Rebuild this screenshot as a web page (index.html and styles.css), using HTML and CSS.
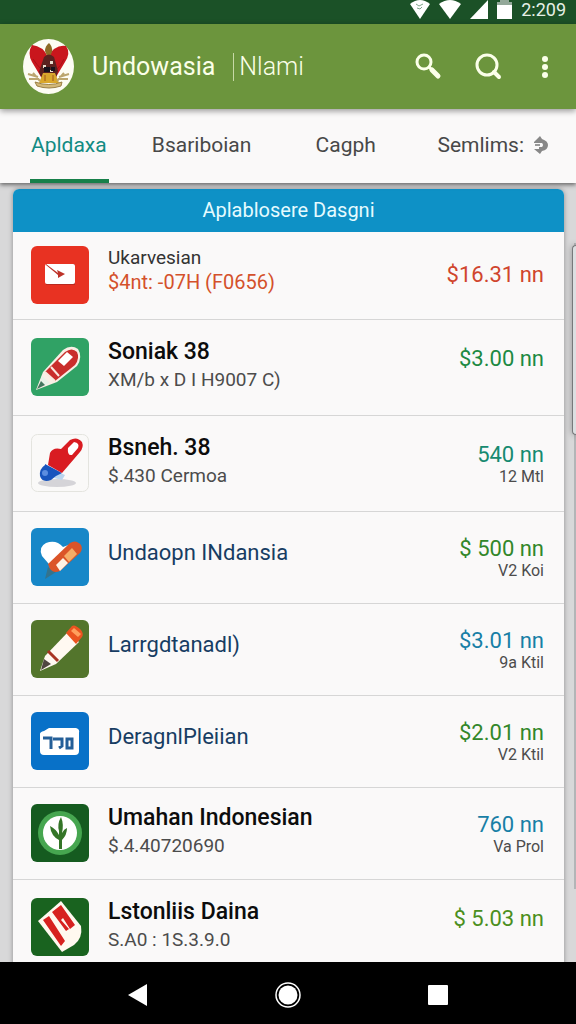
FILE: index.html
```html
<!DOCTYPE html>
<html lang="id">
<head>
    <meta charset="UTF-8">
    <meta name="viewport" content="width=device-width, initial-scale=1.0">
    <title>Undowasia</title>
    <link rel="stylesheet" href="styles.css">
</head>
<body>
    <div class="status-bar">
        <svg width="20" height="20" viewBox="0 0 20 20"><path d="M0 4Q10-4 20 4L10 19z" fill="#fff"/><path d="M6 4l3 2 4-2M7 8l3 1 2-2" fill="none" stroke="#7fa489"/></svg>
        <svg width="22" height="20" viewBox="0 0 22 20"><path d="M0 4Q11-4 22 4L11 19z" fill="#fff"/></svg>
        <svg width="18" height="20" viewBox="0 0 18 20"><path d="M18 0v19H0z" fill="#fff"/></svg>
        <svg width="15" height="20" viewBox="0 0 15 20"><path d="M3 0h9v2h3v5H0V2h3z" fill="#93a899"/><path d="M0 5h15v14H0z" fill="#fff"/></svg>
        <span class="clock">2:209</span>
    </div>

    <header class="app-bar">
        <svg class="emblem" viewBox="0 0 51 55">
            <ellipse cx="25.500" cy="27.500" rx="25.500" ry="27.500" fill="#fdfcf4"/>
            <path d="M25 18Q20 7 9 6Q4 14 9 23L18 38H33L42 23Q48 14 43 7Q32 5 25 18z" fill="#c9161d"/>
            <path d="M10 20Q14 26 18 30M41 20Q38 27 33 31" fill="none" stroke="#a90f15"/>
            <path d="M22 12Q22 7 26 4Q30 8 29 13L27 17H24z" fill="#8c6b26"/>
            <path d="M21 18Q26 13 31 18L35 32L32 42H20L16 33z" fill="#5a2220"/>
            <path d="M20 26h3v3h-3zM27 22h3v3h-3zM25 31h5v2h-5z" fill="#e9dfd0"/>
            <path d="M21 28h6v5h-6zM28 28h4v4h-4z" fill="#17121c"/>
            <path d="M20 34H32L36 44H16z" fill="#d9a72c"/>
            <path d="M22 36v6M30 36v6" stroke="#a2571d"/>
            <path d="M5 35L15 38M6 40L16 40M10 34L17 42M46 35L36 38M45 40L35 40M41 34L34 42" stroke="#bba56e" stroke-width="2"/>
            <path d="M12 43Q26 48 39 43L38 47Q26 51 14 47z" fill="#d3b878" stroke="#9b8046"/>
        </svg>
        <h1 class="app-title">Undowasia</h1>
        <span class="app-subtitle">Nlami</span>
        <div class="app-actions">
            <button class="icon-button" aria-label="Find">
                <svg width="28" height="28" viewBox="0 0 28 28" fill="none" stroke="#fbffe9"><circle cx="9" cy="9" r="7" stroke-width="3"/><path d="M14 14l4 4" stroke-width="3"/><path d="M17 17l6 6" stroke-width="5" stroke-linecap="round"/></svg>
            </button>
            <button class="icon-button" aria-label="Search">
                <svg width="28" height="28" viewBox="0 0 28 28" fill="none" stroke="#fbffe9"><circle cx="12" cy="12" r="10" stroke-width="3"/><path d="M19 19l5 5" stroke-width="4" stroke-linecap="round"/></svg>
            </button>
            <button class="icon-button" aria-label="More">
                <svg width="28" height="28" viewBox="0 0 28 28" fill="#fbffe9"><circle cx="14" cy="6" r="3"/><circle cx="14" cy="14" r="3"/><circle cx="14" cy="22" r="3"/></svg>
            </button>
        </div>
    </header>

    <nav class="tabs">
        <a class="tab active" href="#">Apldaxa</a>
        <a class="tab" href="#">Bsariboian</a>
        <a class="tab" href="#">Cagph</a>
        <a class="tab" href="#">Semlims:
            <svg width="14" height="20" viewBox="0 0 14 20"><path d="M0 7L6 1L8 4Q14 6 14 10Q14 15 8 16L6 19L0 14H5V12H8Q10 10 8 8H0z" fill="#888"/><path d="M1 10h5" stroke="#999" stroke-width="2"/></svg>
        </a>
    </nav>

    <main class="content">
        <section class="card">
            <h2 class="card-header">Aplablosere Dasgni</h2>
            <ul class="list">
                <li class="item first">
                    <svg class="thumb" viewBox="0 0 58 58"><rect width="58" height="58" rx="6" fill="#e83222"/><path d="M15 18h29v21H15z" fill="#b92a20"/><rect x="14" y="18" width="30" height="20" rx="2" fill="#fff"/><path d="M15 18L27 27L26 24L34 28L27 32L27 29L15 19z" fill="#bd3329"/></svg>
                    <div class="info">
                        <div class="name">Ukarvesian</div>
                        <div class="detail">$4nt: -07H (F0656)</div>
                    </div>
                    <div class="price red"><div class="amount">$16.31 nn</div></div>
                </li>
                <li class="item tall">
                    <svg class="thumb" viewBox="0 0 58 58"><rect width="58" height="58" rx="6" fill="#30a265"/><path d="M5 52L12 34L32 12Q40 6 47 11Q52 19 46 28L26 44z" fill="#f9eee5"/><path d="M14 34L34 14Q41 9 46 14Q49 20 44 27L24 43z" fill="#c92d2b"/><path d="M27 23L36 14L42 19L33 28z" fill="#fff"/><path d="M14 34l10 9M20 29l8 9" stroke="#fae8df" stroke-width="2"/><path d="M11 38l8 7L7 50z" fill="#e8f1e7"/><path d="M6 51l4-8 4 4z" fill="#44765e"/></svg>
                    <div class="info strong">
                        <div class="name">Soniak 38</div>
                        <div class="detail">XM/b x D I H9007 C)</div>
                    </div>
                    <div class="price green"><div class="amount">$3.00 nn</div></div>
                </li>
                <li class="item tall">
                    <svg class="thumb" viewBox="0 0 58 58"><rect x=".5" y=".5" width="57" height="57" rx="6" fill="#faf9f8" stroke="#e4e4df"/><ellipse cx="26" cy="49" rx="19" ry="4" fill="#d5d4d8"/><path d="M27 38l7 3-3 5-8-2z" fill="#b9d4ee"/><path d="M14 30L31 39L25 42L20 46Q11 49 9 42Q8 35 14 31z" fill="#1754bd"/><circle cx="14" cy="39" r="3" fill="#5b8de0"/><path d="M17 31L19 19Q22 13 30 15L39 6Q46 2 51 8Q53 13 49 18L31 39z" fill="#d91c22"/><path d="M37 14L43 8Q49 9 47 14L41 21Q36 22 37 14z" fill="#fff"/></svg>
                    <div class="info strong">
                        <div class="name">Bsneh. 38</div>
                        <div class="detail">$.430 Cermoa</div>
                    </div>
                    <div class="price teal"><div class="amount">540 nn</div><div class="unit">12 Mtl</div></div>
                </li>
                <li class="item">
                    <svg class="thumb" viewBox="0 0 58 58"><rect width="58" height="58" rx="6" fill="#1787c8"/><path d="M23 42L11 28Q7 19 15 15Q25 11 32 19L43 15L24 43z" fill="#fff"/><path d="M14 51l3-12 8 5z" fill="#34738d"/><path d="M17 36L39 15Q45 11 50 17Q52 21 49 25L29 43Q20 47 17 36z" fill="#db5428"/><path d="M33 28L41 20L46 26L38 34z" fill="#f6ac67"/><path d="M25 37L32 30L37 35L29 43z" fill="#fff2e4"/></svg>
                    <div class="info single"><div class="name">Undaopn INdansia</div></div>
                    <div class="price leaf"><div class="amount">$ 500 nn</div><div class="unit">V2 Koi</div></div>
                </li>
                <li class="item">
                    <svg class="thumb" viewBox="0 0 58 58"><rect width="58" height="58" rx="6" fill="#53752c"/><path d="M9 51L14 36L37 12L48 22L25 44z" fill="#fff9f1"/><path d="M35 13L41 6Q44 4 50 10Q53 14 51 17L45 24z" fill="#eb5420"/><path d="M40 11l3-3 7 6-3 3z" fill="#ffa05d"/><path d="M17 31L27 41" stroke="#a83523" stroke-width="3"/><path d="M13 39l7 5-10 6z" fill="#504741"/></svg>
                    <div class="info single"><div class="name">Larrgdtanadl)</div></div>
                    <div class="price blue"><div class="amount">$3.01 nn</div><div class="unit">9a Ktil</div></div>
                </li>
                <li class="item">
                    <svg class="thumb" viewBox="0 0 58 58"><rect width="58" height="58" rx="6" fill="#0871c8"/><path d="M13 19L18 16H45Q49 17 48 21V39Q48 43 44 43H13Q9 43 9 39V22Q9 20 13 19z" fill="#fff"/><path d="M12 26H20V37M22 27H31V34L28 36M36 27H41V36H36z" fill="none" stroke="#245f98" stroke-width="3"/></svg>
                    <div class="info single"><div class="name">DeragnlPleiian</div></div>
                    <div class="price leaf"><div class="amount">$2.01 nn</div><div class="unit">V2 Ktil</div></div>
                </li>
                <li class="item">
                    <svg class="thumb" viewBox="0 0 58 58"><rect width="58" height="58" rx="6" fill="#155b20"/><circle cx="29" cy="29" r="22" fill="#46a650"/><circle cx="29" cy="29" r="17" fill="#fff"/><path d="M28 45V36Q20 32 19 22Q25 25 28 31V27Q26 20 30 13Q33 20 31 29Q33 25 36 24Q36 31 31 36V45z" fill="#347528"/></svg>
                    <div class="info strong">
                        <div class="name">Umahan Indonesian</div>
                        <div class="detail">$.4.40720690</div>
                    </div>
                    <div class="price blue"><div class="amount">760 nn</div><div class="unit">Va Prol</div></div>
                </li>
                <li class="item tall">
                    <svg class="thumb" viewBox="0 0 58 58"><rect width="58" height="58" rx="6" fill="#19631f"/><path d="M7 23L30 3L50 28Q52 40 43 47L31 54z" fill="#fff9ef"/><path d="M12 22L18 18L34 43L30 48zM21 14L30 7L44 27L39 31L32 20L30 22L38 31L35 33z" fill="#d7221f"/></svg>
                    <div class="info strong">
                        <div class="name">Lstonliis Daina</div>
                        <div class="detail">S.A0 : 1S.3.9.0</div>
                    </div>
                    <div class="price lime"><div class="amount">$ 5.03 nn</div></div>
                </li>
            </ul>
        </section>
        <div class="scroll-track"></div>
        <div class="scroll-thumb"></div>
    </main>

    <footer class="nav-bar">
        <button class="nav-button" aria-label="Back"><svg width="24" height="24" viewBox="0 0 24 24"><path d="M2 12L21 1V23z" fill="#fff"/></svg></button>
        <button class="nav-button" aria-label="Home"><svg width="26" height="26" viewBox="0 0 26 26"><circle cx="13" cy="13" r="12" fill="none" stroke="#fff" stroke-width="1.500"/><circle cx="13" cy="13" r="9.500" fill="#fff"/></svg></button>
        <button class="nav-button" aria-label="Recent apps"><svg width="20" height="20" viewBox="0 0 20 20"><rect width="20" height="20" rx="1" fill="#fff"/></svg></button>
    </footer>
</body>
</html>
```
FILE: styles.css
```css
* {
    box-sizing: border-box;
}
body {
    margin: 0;
    height: 100vh;
    display: flex;
    flex-direction: column;
    overflow: hidden;
    font-family: Roboto, sans-serif;
    background: #d8d8d9;
    color: #333;
}
h1, h2, ul {
    margin: 0;
    padding: 0;
    font-weight: 400;
}
button {
    padding: 0;
    border: none;
    background: none;
    cursor: pointer;
}
svg {
    display: block;
    flex: none;
}

/* top bars */
.status-bar {
    flex: none;
    height: 24px;
    padding: 0 10px 4px;
    display: flex;
    justify-content: flex-end;
    align-items: center;
    gap: 9px;
    background: #1b5127;
}
.clock {
    font-size: 18px;
    line-height: 20px;
    color: #e6f0e6;
}
.app-bar {
    flex: none;
    height: 85px;
    padding: 0 17px 0 23px;
    display: flex;
    align-items: center;
    background: #6c953d;
    color: #fbffe9;
    position: relative;
    z-index: 2;
    box-shadow: 0 2px 6px rgba(0,0,0,0.4);
}
.emblem {
    width: 51px;
    height: 55px;
}
.app-title {
    margin-left: 18px;
    font-size: 25px;
}
.app-subtitle {
    margin-left: 18px;
    padding-left: 5px;
    border-left: 1px solid #c7d9a6;
    font-size: 25px;
    line-height: 28px;
    font-weight: 300;
}
.app-actions {
    margin-left: auto;
    display: flex;
    gap: 32px;
}
.app-actions .icon-button:last-child {
    margin-left: -4px;
}

.tabs {
    flex: none;
    height: 74px;
    padding: 0 26px 0 30px;
    display: grid;
    grid-template-columns: 121fr 164fr 122fr 113fr;
    justify-items: start;
    background: #faf9f9;
    position: relative;
    z-index: 1;
    box-shadow: 0 2px 4px rgba(0,0,0,0.5);
}
.tab {
    display: flex;
    align-items: center;
    gap: 10px;
    border-bottom: 4px solid transparent;
    padding: 2px 2px 0 1px;
    font-size: 21px;
    color: #484848;
    text-decoration: none;
    white-space: nowrap;
}
.tab.active {
    color: #128b83;
    border-color: #17804a;
}

/* list */
.content {
    flex: 1;
    min-height: 0;
    padding: 6px 12px 0 13px;
    overflow: hidden;
    position: relative;
}
.card {
    background: #faf9f9;
    border-radius: 6px 6px 0 0;
    box-shadow: 0 0 5px rgba(0,0,0,0.35);
}
.card-header {
    border-radius: 6px 6px 0 0;
    background: #0e91c6;
    color: #e5fbff;
    font-size: 20px;
    line-height: 43px;
    text-align: center;
}
.list {
    list-style: none;
}
.item {
    min-height: 92px;
    padding: 16px 20px 0 17px;
    display: flex;
    align-items: flex-start;
    border-bottom: 1px solid #d6d6d6;
}
.item.first {
    min-height: 88px;
    padding-top: 14px;
}
.item.tall {
    min-height: 96px;
    padding-top: 18px;
}
.thumb {
    width: 60px;
    height: 58px;
}
.info {
    flex: 1;
    margin-left: 18px;
    white-space: nowrap;
}
.name {
    font-size: 19px;
    line-height: 24px;
}
.detail {
    font-size: 19px;
    line-height: 28px;
    color: #4c4c4c;
}
.first .detail {
    font-size: 20px;
    line-height: 24px;
    color: #d4512b;
}
.strong .name {
    font-size: 23px;
    line-height: 28px;
    font-weight: 500;
    color: #0c0c0c;
}
.single .name {
    font-size: 22px;
    line-height: 50px;
    color: #173d63;
}
.price {
    padding-top: 9px;
    text-align: right;
    white-space: nowrap;
}
.first .price {
    padding-top: 17px;
}
.amount {
    font-size: 22px;
    line-height: 24px;
}
.unit {
    font-size: 16px;
    line-height: 20px;
    color: #4c4c4c;
}
.red { color: #d0452d; }
.green { color: #1d8a43; }
.teal { color: #168a70; }
.leaf { color: #32872a; }
.blue { color: #187fa6; }
.lime { color: #4b8f20; }

.scroll-track {
    position: absolute;
    top: 60px;
    right: 0;
    width: 2px;
    height: 646px;
    background: #b3b5b7;
}
.scroll-thumb {
    position: absolute;
    top: 62px;
    right: 0;
    width: 4px;
    height: 190px;
    border: 1px solid #77797b;
    border-right: none;
    border-radius: 4px 0 0 4px;
    background: #dcdfe1;
    box-shadow: 0 0 6px rgba(0,0,0,0.4);
}

/* system navigation */
.nav-bar {
    flex: none;
    height: 62px;
    padding-top: 4px;
    display: flex;
    justify-content: center;
    align-items: center;
    gap: 100px;
    background: #000;
    position: relative;
}
.nav-button {
    width: 50px;
    display: flex;
    justify-content: center;
}
```
